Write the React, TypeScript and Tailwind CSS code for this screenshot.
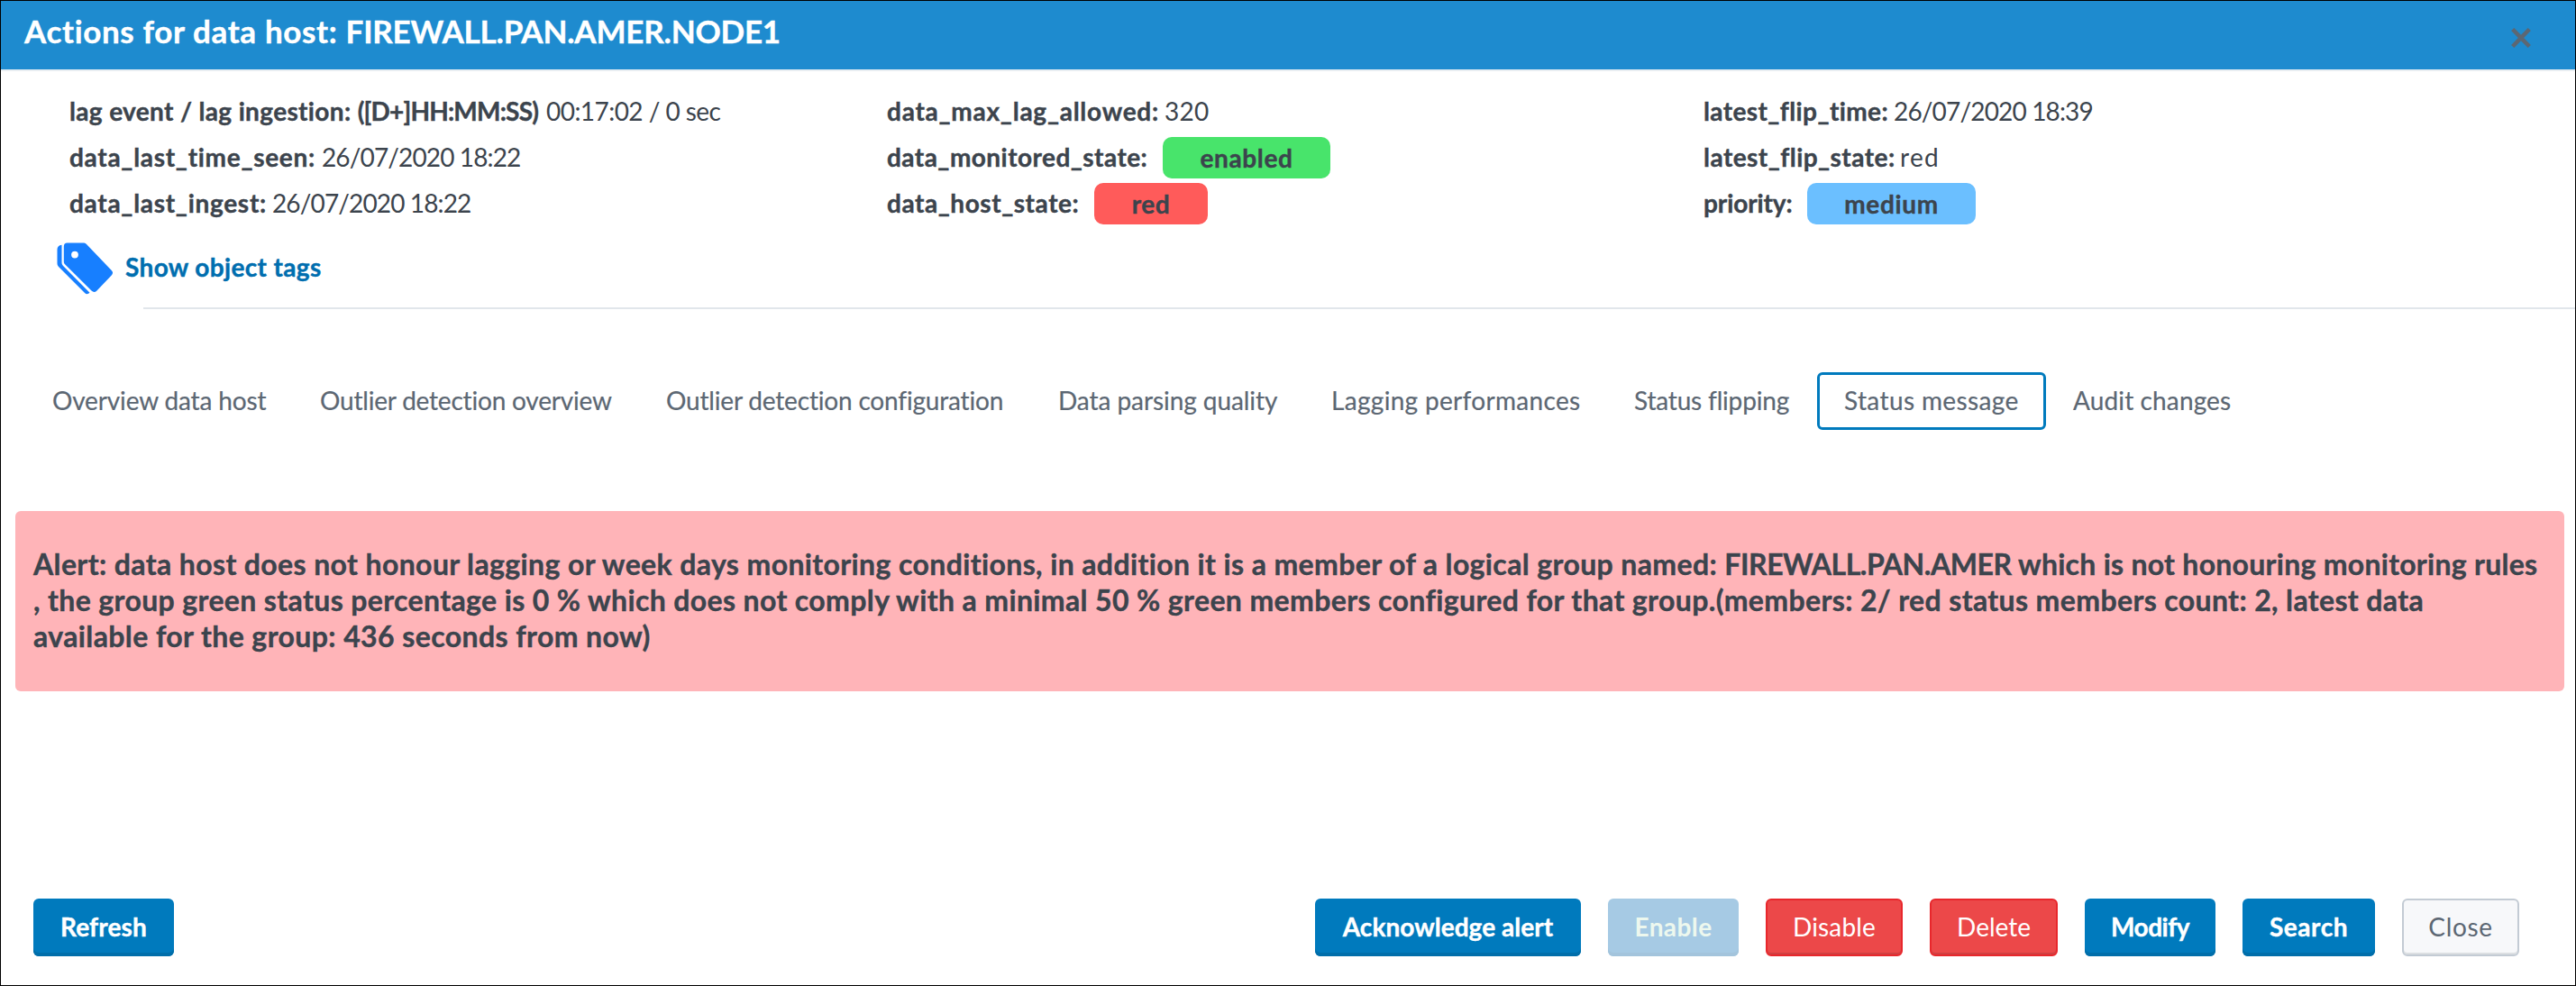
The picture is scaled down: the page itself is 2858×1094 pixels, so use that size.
import React from "react";

type Item = { text: React.ReactNode; cls: string };

const tabs: { text: string; cls: string; box: string; active?: boolean }[] = [
  { text: "Overview data host", cls: "tracking-[-0.15px]", box: "w-[297px]" },
  { text: "Outlier detection overview", cls: "tracking-[-0.2px]", box: "w-[384px]" },
  { text: "Outlier detection configuration", cls: "tracking-[-0.18px]", box: "w-[435px]" },
  { text: "Data parsing quality", cls: "tracking-[-0.07px]", box: "w-[303px]" },
  { text: "Lagging performances", cls: "tracking-[0.32px]", box: "w-[336px]" },
  { text: "Status flipping", cls: "tracking-[-0.18px]", box: "w-[233px]" },
  { text: "Status message", cls: "tracking-[0.38px]", box: "w-[254px]", active: true },
  { text: "Audit changes", cls: "tracking-[0.13px]", box: "w-[237px]" },
];

function Label({ text, cls }: Item) {
  return <span className={`shrink-0 font-bold [-webkit-text-stroke:0.4px] ${cls}`}>{text}</span>;
}

function Row({ children }: { children: React.ReactNode }) {
  return <div className="flex h-[51px] items-center leading-[51px]">{children}</div>;
}

function Badge({ text, cls }: Item) {
  return (
    <span
      className={`mt-px flex h-[46px] items-center justify-center rounded-[10px] pb-px leading-none font-bold [-webkit-text-stroke:0.4px] ${cls}`}
    >
      {text}
    </span>
  );
}

const primary =
  "bg-[#007abd] font-bold text-white shadow-[inset_0_-4px_0_#006eaa] [-webkit-text-stroke:0.4px]";
const danger =
  "border-2 border-[#e8272c] bg-[#ec4849] text-white shadow-[inset_0_-2px_0_#d04042]";

function Button({ text, cls }: Item) {
  return (
    <button className={`flex h-16 items-center justify-center rounded-[6px] pb-[2px] leading-none ${cls}`}>
      {text}
    </button>
  );
}

function TagsIcon() {
  return (
    <svg className="h-[58px] w-[62px]" viewBox="0 0 62 58" fill="#177fff">
      <path d="M5.5 2.8C2 3.2.5 5 .5 8v15c0 1.800.5 3 1.800 4.300L31 56c1.800 1.800 3.800 1.600 5.500-.2L7.300 26.200C6 24.900 5.500 24 5.500 22z" />
      <path
        fillRule="evenodd"
        d="M11.500.5H29c1.700 0 2.800.4 4 1.600l27.500 28.600c2 2 2 3.700.2 5.700L44.500 53.500c-2 2-4 2-6 .1L9.300 24.500C8.200 23.400 7.800 22.500 7.800 21V4.500C7.800 2 9.200.5 11.500.5zM20 9.700a3.900 3.900 0 1 0 .01 7.800 3.900 3.900 0 0 0-.01-7.800z"
      />
    </svg>
  );
}

export default function App() {
  return (
    <div className="flex h-[1094px] w-[2858px] flex-col overflow-hidden border border-black bg-white font-['Lato',sans-serif] text-[28px] whitespace-nowrap text-[#3c444d]">
      <header className="flex h-[78px] shrink-0 justify-between border-b-2 border-[#e9eef2] bg-[#1e8bcf] pr-[49px] pl-[26px]">
        <h1 className="pt-[13px] text-[35px] leading-[40px] font-bold tracking-[0.64px] text-white [-webkit-text-stroke:0.4px]">
          Actions for data host: <span className="tracking-[-0.2px]">FIREWALL.PAN.AMER.NODE1</span>
        </h1>
        <svg className="mt-[30px] h-[22px] w-[22px]" viewBox="0 0 22 22" stroke="#5c6773" strokeWidth="4.500">
          <path d="M1.700 1.500l18.600 19M20.300 1.500l-18.600 19" />
        </svg>
      </header>

      <section className="mt-[19px] flex h-[153px] shrink-0 pl-[76px]">
        <div className="w-[907px]">
          <Row>
            <Label
              text={
                <>
                  lag event / lag ingestion: <span className="tracking-[-0.8px]">([D+]HH:MM:SS)</span>
                </>
              }
              cls="w-[529px] tracking-[0.35px]"
            />
            <span className="tracking-[-0.55px]">00:17:02 / 0 sec</span>
          </Row>
          <Row>
            <Label text="data_last_time_seen:" cls="w-[280px] tracking-[0.71px]" />
            <span className="tracking-[-0.87px]">26/07/2020 18:22</span>
          </Row>
          <Row>
            <Label text="data_last_ingest:" cls="w-[225px] tracking-[0.71px]" />
            <span className="tracking-[-0.87px]">26/07/2020 18:22</span>
          </Row>
        </div>
        <div className="w-[906px]">
          <Row>
            <Label text="data_max_lag_allowed:" cls="w-[308px] tracking-[0.75px]" />
            <span className="tracking-[0.26px]">320</span>
          </Row>
          <Row>
            <Label text="data_monitored_state:" cls="w-[306px] tracking-[0.46px]" />
            <Badge text="enabled" cls="w-[186px] bg-[#48e46b] tracking-[0.62px]" />
          </Row>
          <Row>
            <Label text="data_host_state:" cls="w-[230px] tracking-[0.55px]" />
            <Badge text="red" cls="w-[126px] bg-[#ff5b5a] tracking-[0.5px]" />
          </Row>
        </div>
        <div>
          <Row>
            <Label text="latest_flip_time:" cls="w-[211px] tracking-[0.4px]" />
            <span className="tracking-[-0.84px]">26/07/2020 18:39</span>
          </Row>
          <Row>
            <Label text="latest_flip_state:" cls="w-[218px] tracking-[0.46px]" />
            <span className="tracking-[1.300px]">red</span>
          </Row>
          <Row>
            <Label text="priority:" cls="w-[115px] tracking-[-0.1px]" />
            <Badge text="medium" cls="w-[187px] bg-[#6bbfff] tracking-[0.66px]" />
          </Row>
        </div>
      </section>

      <div className="mt-[18px] flex h-[58px] shrink-0 pl-[62px]">
        <TagsIcon />
        <a className="ml-[14px] pt-[6px] leading-[42px] font-bold tracking-[0.35px] text-[#006eaf] [-webkit-text-stroke:0.4px]">
          Show object tags
        </a>
      </div>
      <hr className="mt-[14px] ml-[158px] shrink-0 border-t-2 border-[#e1e6eb]" />

      <nav className="mt-[70px] ml-[27px] flex shrink-0 text-[#5c6773]">
        {tabs.map((t) => (
          <a
            key={t.text}
            className={`flex h-16 items-center rounded-[6px] border-[3px] pb-[3px] pl-[27px] leading-none [-webkit-text-stroke:0.2px] ${t.box} ${t.cls} ${t.active ? "border-[#007abd]" : "border-transparent"}`}
          >
            {t.text}
          </a>
        ))}
      </nav>

      <div className="mt-[90px] mr-[12px] ml-[16px] h-[200px] shrink-0 rounded-[6px] bg-[#ffb4b8] pt-[39px] pl-[20px] text-[32px] leading-[40px] font-bold text-[#3c444d] [-webkit-text-stroke:0.4px]">
        <p className="tracking-[0.38px]">
          Alert: data host does not honour lagging or week days monitoring conditions, in addition it is a member of a
          logical group named: <span className="tracking-[-0.45px]">FIREWALL.PAN.AMER</span>
          <span className="tracking-[0.27px]"> which is not honouring monitoring rules</span>
        </p>
        <p className="tracking-[0.37px]">
          , the group green status percentage is 0 % which does not comply with a minimal 50 % green members configured
          for that group.(members: 2/ red status members count: 2, latest data
        </p>
        <p className="tracking-[0.4px]">available for the group: 436 seconds from now)</p>
      </div>

      <footer className="mt-[230px] flex shrink-0 justify-between pr-[62px] pl-[36px]">
        <Button text="Refresh" cls={`${primary} w-[156px] tracking-[0.14px]`} />
        <div className="flex gap-[30px]">
          <Button text="Acknowledge alert" cls={`${primary} w-[295px] tracking-[0.05px]`} />
          <Button
            text="Enable"
            cls="w-[145px] bg-[#a6cae4] font-bold tracking-[0.41px] text-[#edf8ee] shadow-[inset_0_-4px_0_#a3c4dc]"
          />
          <Button text="Disable" cls={`${danger} w-[152px] tracking-[0.16px]`} />
          <Button text="Delete" cls={`${danger} w-[142px]`} />
          <Button text="Modify" cls={`${primary} w-[145px] tracking-[-0.5px]`} />
          <Button text="Search" cls={`${primary} w-[147px] tracking-[0.54px]`} />
          <Button
            text="Close"
            cls="w-[130px] border-2 border-[#c3cbd4] bg-[#f7f8fa] tracking-[0.67px] text-[#5c6773] shadow-[inset_0_-2px_0_#dcdfe2]"
          />
        </div>
      </footer>
    </div>
  );
}
